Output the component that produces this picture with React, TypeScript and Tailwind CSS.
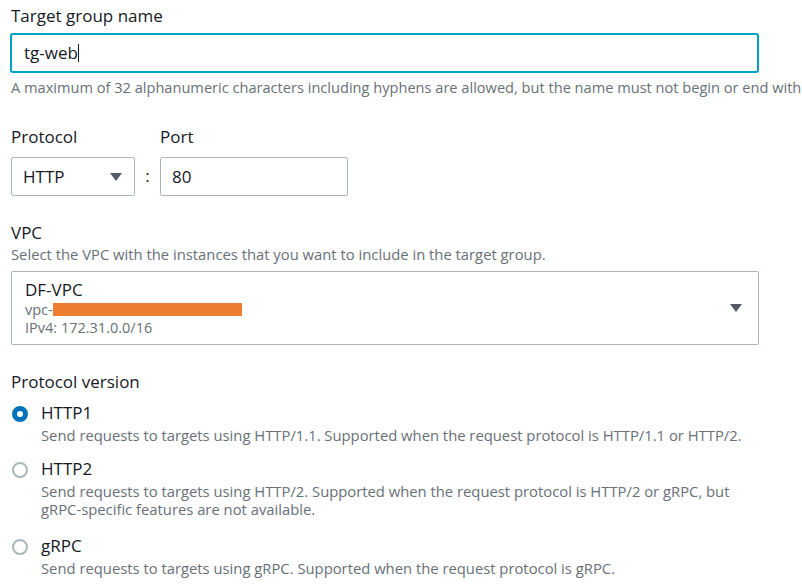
import React from "react";

const Caret = () => (
  <svg width="12" height="8" viewBox="0 0 12 8" className="shrink-0">
    <path d="M0 0 H12 L6 8 Z" fill="#545b64" />
  </svg>
);

const Radio = ({ checked }: { checked?: boolean }) =>
  checked ? (
    <span className="w-[16px] h-[16px] rounded-full border-[5px] border-[#0073bb] bg-white shrink-0 box-border" />
  ) : (
    <span className="w-[16px] h-[16px] rounded-full border-[2px] border-[#aab7b8] bg-white shrink-0 box-border" />
  );

const Option = ({
  checked,
  label,
  desc,
  className,
}: {
  checked?: boolean;
  label: string;
  desc: React.ReactNode;
  className?: string;
}) => (
  <div className={"flex " + (className ?? "")}>
    <div className="w-[30px] flex justify-start pl-[1px] pt-[5px]">
      <Radio checked={checked} />
    </div>
    <div className="flex flex-col">
      <div className="text-[17px] leading-[24px] text-[#16191f]">{label}</div>
      <div className="mt-[1px] text-[14.8px] leading-[18px] text-[#687078]">{desc}</div>
    </div>
  </div>
);

export default function App() {
  return (
    <div
      className="w-[802px] h-[588px] bg-white overflow-hidden pl-[11px] pt-[5px] text-[#16191f]"
      style={{ fontFamily: '"Open Sans", "Noto Sans", sans-serif' }}
    >
      <div className="text-[17px] leading-[22px]">Target group name</div>
      <div className="mt-[6px] w-[749px] h-[40px] border-2 border-[#00a1c9] rounded-[3px] flex items-center pl-[12px] -ml-[1px] text-[17px]">
        tg-web
        <span className="w-[1px] h-[18px] bg-[#16191f]" />
      </div>
      <div className="mt-[4px] text-[14.6px] leading-[20px] text-[#687078] whitespace-nowrap">
        A maximum of 32 alphanumeric characters including hyphens are allowed, but the name must not begin or end with
      </div>

      <div className="mt-[29px] flex">
        <div className="flex flex-col">
          <div className="text-[17px] leading-[22px]">Protocol</div>
          <div className="mt-[9px] w-[124px] h-[39px] border border-[#aab7b8] rounded-[2px] flex items-center justify-between pl-[11px] pr-[12px] text-[17px]">
            <span>HTTP</span>
            <Caret />
          </div>
        </div>
        <div className="w-[25px] flex items-end justify-center pb-[8px] text-[17px]">:</div>
        <div className="flex flex-col">
          <div className="text-[17px] leading-[22px]">Port</div>
          <div className="mt-[9px] w-[188px] h-[39px] border border-[#aab7b8] rounded-[2px] flex items-center pl-[11px] text-[17px]">
            80
          </div>
        </div>
      </div>

      <div className="mt-[26px] text-[17px] leading-[22px]">VPC</div>
      <div className="text-[14.8px] leading-[21px] text-[#687078]">
        Select the VPC with the instances that you want to include in the target group.
      </div>
      <div className="mt-[6px] w-[748px] h-[74px] border border-[#aab7b8] rounded-[2px] flex items-center justify-between pl-[13px] pr-[16px]">
        <div className="flex flex-col">
          <div className="text-[17px] leading-[20px]">DF-VPC</div>
          <div className="mt-[1px] text-[14.5px] leading-[18px] text-[#687078] flex items-center">
            vpc-
            <span className="w-[189px] h-[13px] bg-[#ed7d31]" />
          </div>
          <div className="text-[14.5px] leading-[18px] text-[#687078]">IPv4: 172.31.0.0/16</div>
        </div>
        <Caret />
      </div>

      <div className="mt-[26px] text-[17px] leading-[22px]">Protocol version</div>
      <div className="mt-[8px] flex flex-col">
        <Option
          checked
          label="HTTP1"
          desc="Send requests to targets using HTTP/1.1. Supported when the request protocol is HTTP/1.1 or HTTP/2."
        />
        <Option
          className="mt-[13px]"
          label="HTTP2"
          desc={
            <>
              Send requests to targets using HTTP/2. Supported when the request protocol is HTTP/2 or gRPC, but
              <br />
              gRPC-specific features are not available.
            </>
          }
        />
        <Option
          className="mt-[16px]"
          label="gRPC"
          desc="Send requests to targets using gRPC. Supported when the request protocol is gRPC."
        />
      </div>
    </div>
  );
}
